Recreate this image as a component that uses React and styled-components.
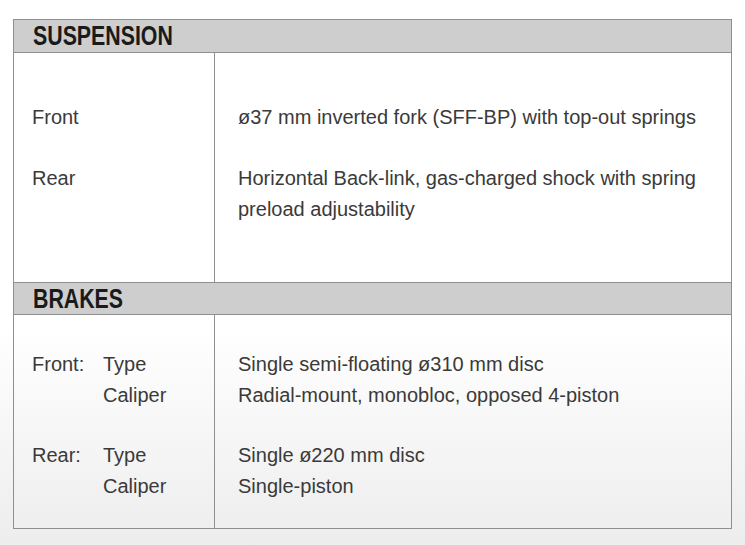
import React from "react";
import styled, { createGlobalStyle } from "styled-components";

const GlobalStyle = createGlobalStyle`
  html, body { margin: 0; padding: 0; }
  body {
    min-height: 100vh;
    background: linear-gradient(to bottom, #ffffff 0%, #ffffff 60%, #ededed 100%);
    font-family: "Liberation Sans", Arial, sans-serif;
  }
`;

const Page = styled.div`
  padding: 19px 0 0 13px;
  box-sizing: border-box;
  height: 545px;
`;

const Table = styled.div`
  width: 719px;
  box-sizing: border-box;
  border: 1px solid #8f8f8f;
`;

const SectionHeader = styled.div`
  height: 33px;
  box-sizing: border-box;
  background: #cecece;
  border-top: ${(p) => (p.$first ? "none" : "1px solid #8f8f8f")};
  border-bottom: 1px solid #8f8f8f;
  padding: 1px 0 0 19px;
  overflow: hidden;
`;

const HeaderTitle = styled.span`
  display: inline-block;
  font-family: "Liberation Sans", Arial, sans-serif;
  font-weight: 700;
  font-size: 27px;
  line-height: 31px;
  color: #1a1a1a;
  transform: scaleX(0.79);
  transform-origin: left center;
`;

const SectionBody = styled.div`
  display: grid;
  grid-template-columns: 201px 1fr;
  height: ${(p) => p.$height}px;
`;

const Column = styled.div`
  display: flex;
  flex-direction: column;
  gap: ${(p) => p.$gap}px;
  padding: ${(p) => p.$top}px 20px 0 ${(p) => (p.$value ? 23 : 18)}px;
  border-right: ${(p) => (p.$value ? "none" : "1px solid #8f8f8f")};
  font-size: 20px;
  line-height: 31px;
  color: #3a3a3a;
`;

const Entry = styled.div``;

const LabelGroup = styled.div`
  display: grid;
  grid-template-columns: 71px 1fr;
`;

const Label = styled.div``;

const SubLabels = styled.div`
  display: flex;
  flex-direction: column;
`;

const Line = styled.div``;

export default function App() {
  return (
    <>
      <GlobalStyle />
      <Page>
        <Table>
          <SectionHeader $first>
            <HeaderTitle>SUSPENSION</HeaderTitle>
          </SectionHeader>
          <SectionBody $height={229}>
            <Column $gap={30} $top={49}>
              <Entry>Front</Entry>
              <Entry>Rear</Entry>
            </Column>
            <Column $value $gap={30} $top={49}>
              <Entry>ø37 mm inverted fork (SFF-BP) with top-out springs</Entry>
              <Entry>Horizontal Back-link, gas-charged shock with spring preload adjustability</Entry>
            </Column>
          </SectionBody>
          <SectionHeader>
            <HeaderTitle>BRAKES</HeaderTitle>
          </SectionHeader>
          <SectionBody $height={213}>
            <Column $gap={29} $top={34}>
              <LabelGroup>
                <Label>Front:</Label>
                <SubLabels>
                  <Line>Type</Line>
                  <Line>Caliper</Line>
                </SubLabels>
              </LabelGroup>
              <LabelGroup>
                <Label>Rear:</Label>
                <SubLabels>
                  <Line>Type</Line>
                  <Line>Caliper</Line>
                </SubLabels>
              </LabelGroup>
            </Column>
            <Column $value $gap={29} $top={34}>
              <Entry>
                <Line>Single semi-floating ø310 mm disc</Line>
                <Line>Radial-mount, monobloc, opposed 4-piston</Line>
              </Entry>
              <Entry>
                <Line>Single ø220 mm disc</Line>
                <Line>Single-piston</Line>
              </Entry>
            </Column>
          </SectionBody>
        </Table>
      </Page>
    </>
  );
}
